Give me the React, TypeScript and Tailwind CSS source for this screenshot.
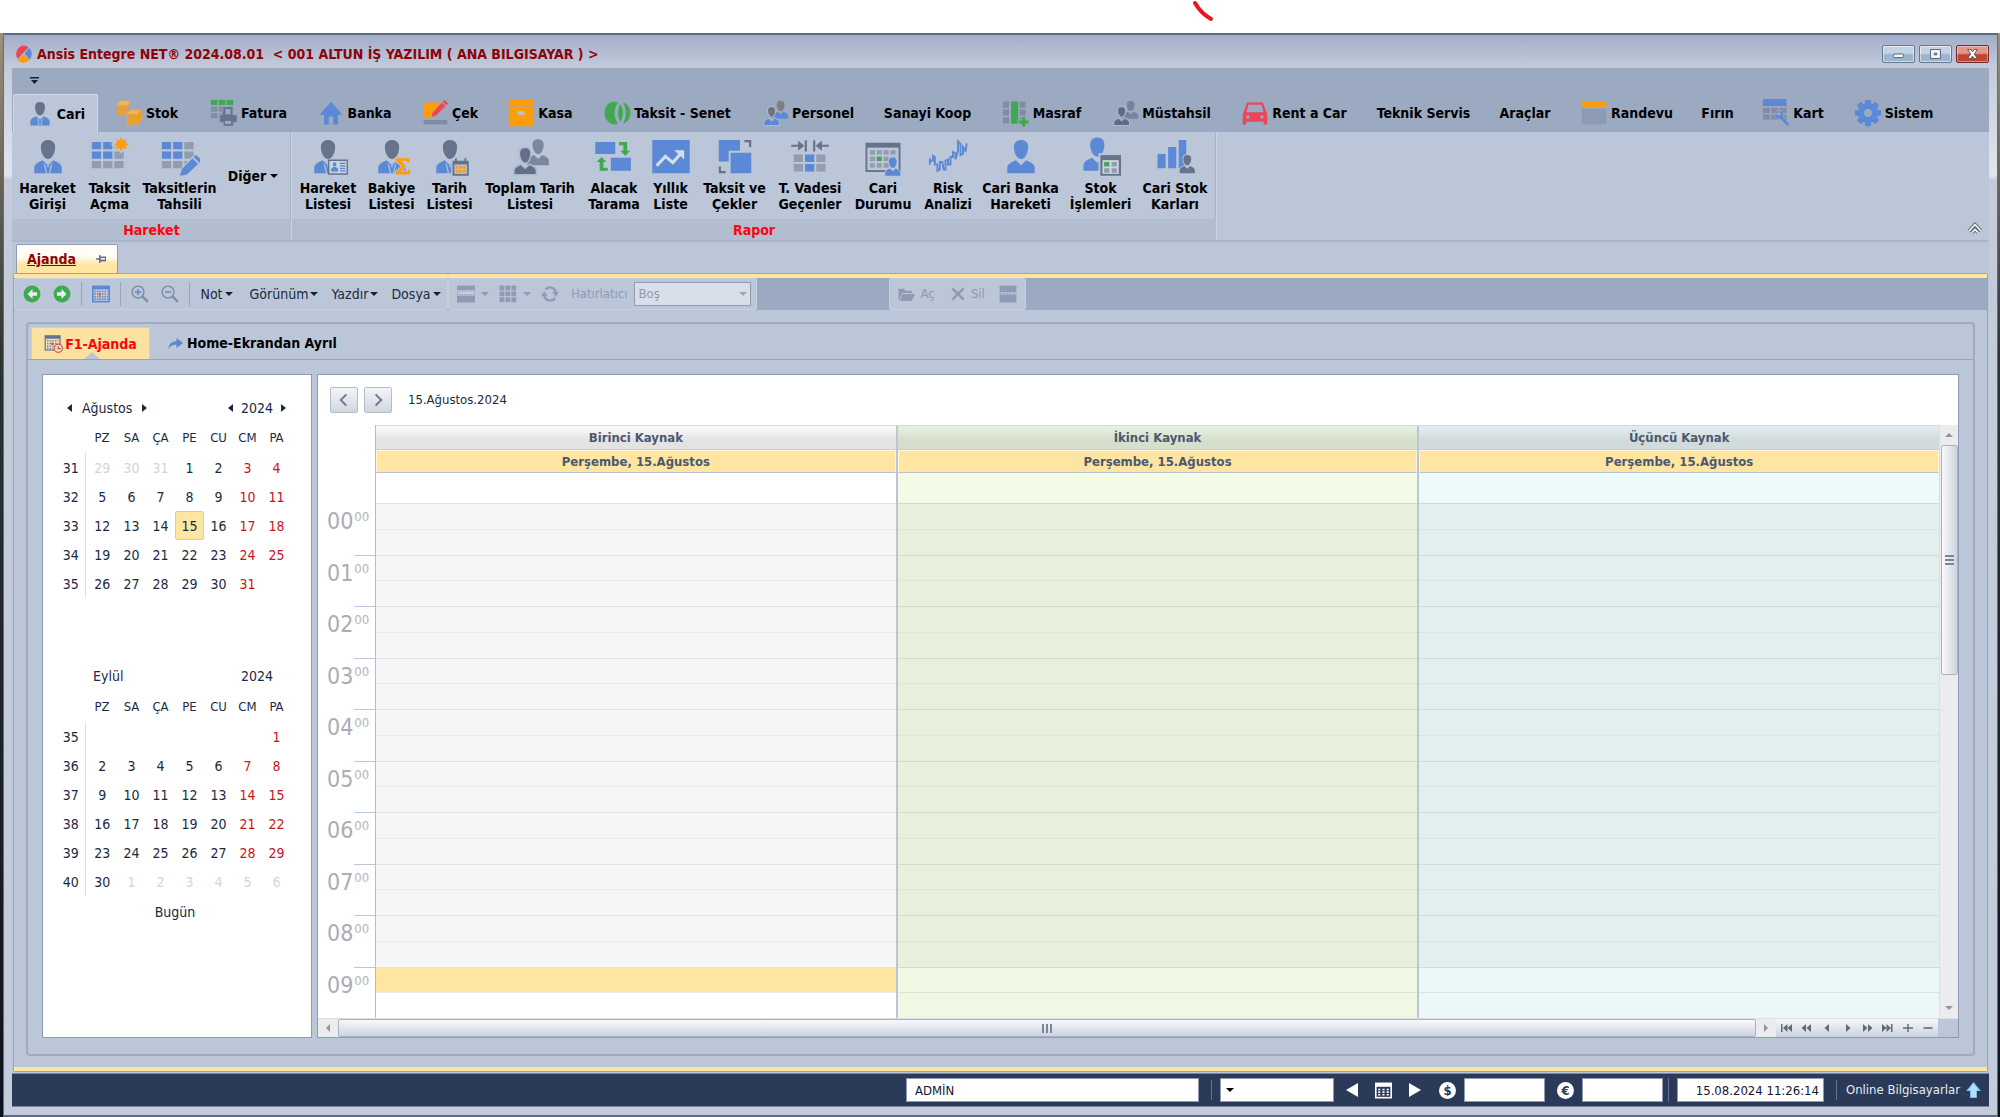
import { ReactNode } from "react";
import { clsx } from "clsx";

const BLUE = "#5b89d6";
const SLATE = "#66738a";
const GRAY = "#929daf";
const GREEN = "#3fa94f";
const ORANGE = "#fd9d0b";
const RED = "#ea4659";
const PAPER = "#bbc6d8";

type SvgProps = { children: ReactNode; className?: string; box?: string };

const Svg = ({ children, className = "size-7", box = "0 0 32 32" }: SvgProps) => (
  <svg viewBox={box} className={clsx("shrink-0", className)} aria-hidden="true">
    {children}
  </svg>
);

type FigureProps = { head?: string; body?: string; tie?: boolean; at?: string };

const Figure = ({ head = SLATE, body = BLUE, tie = false, at }: FigureProps) => (
  <g transform={at}>
    <path
      d="M16 2.4c-3.7 0-5.7 2.3-5.7 5.6 0 3.9 2 9.6 5.7 9.6s5.7-5.7 5.7-9.6c0-3.300-2-5.600-5.700-5.600z"
      fill={head}
    />
    <path
      d="M5 29v-4.500c0-3 3.500-4.500 6.800-6l4.200 4 4.200-4c3.300 1.500 6.800 3 6.800 6V29z"
      fill={body}
    />
    {tie && (
      <path
        d="M12.300 19.500l2 9.500h1l-1.500-6.500zM19.700 19.500l-2 9.500h-1l1.500-6.500zM15 22.500h2l-1 2z"
        fill={PAPER}
      />
    )}
  </g>
);

const cells = [0, 1, 2];

type GridProps = {
  color: (col: number, row: number) => string;
  x?: number;
  y?: number;
  w?: number;
  h?: number;
  px?: number;
  py?: number;
  rows?: number[];
};

const Grid = ({
  color,
  x = 3,
  y = 4,
  w = 7.4,
  h = 5.8,
  px = 9,
  py = 7.6,
  rows = cells,
}: GridProps) => (
  <>
    {rows.map((r) =>
      cells.map((c) => (
        <rect
          key={`${r}-${c}`}
          x={x + c * px}
          y={y + r * py}
          width={w}
          height={h}
          fill={color(c, r)}
        />
      ))
    )}
  </>
);

const cornerBlue = (c: number, r: number) => (c < 2 && r < 2 ? BLUE : GRAY);

const TwoFigures = ({ back, front, body = front, backBody = back }: {
  back: string;
  front: string;
  body?: string;
  backBody?: string;
}) => (
  <>
    <Figure head={back} body={backBody} at="translate(10 0) scale(.78)" />
    <g stroke="#adb9cd" strokeWidth="1.500">
      <Figure head={front} body={body} at="translate(-1 6.500) scale(.82)" />
    </g>
  </>
);

const MiniCalendar = () => (
  <>
    <rect x="17" y="17" width="14" height="14" fill={PAPER} />
    <path d="M18 19h2v-2h1.500v2h6v-2H29v2h2v12H18z" fill={SLATE} />
    <path d="M19.500 22h10v7.500h-10z" fill={PAPER} />
    <path
      d="M20.500 23h2.300v2.300h-2.300zM23.400 23h2.300v2.300h-2.300zM26.300 23h2.300v2.300h-2.300zM20.500 26.200h2.300v2.300h-2.300zM23.400 26.200h2.300v2.300h-2.300zM26.300 26.200h2.300v2.300h-2.300z"
      fill={ORANGE}
    />
  </>
);

const GearShape = () => (
  <>
    {[0, 45, 90, 135].map((a) => (
      <rect
        key={a}
        x="12.500"
        y="1"
        width="7"
        height="30"
        rx="1.500"
        fill={BLUE}
        transform={`rotate(${a} 16 16)`}
      />
    ))}
    <circle cx="16" cy="16" r="11.500" fill={BLUE} />
    <circle cx="16" cy="16" r="4.500" fill="#9ba9c1" />
  </>
);

const ribbonTabs: { label: string; width: string; icon?: ReactNode }[] = [
  { label: "Cari", width: "w-[85px]", icon: <Figure tie /> },
  {
    label: "Stok",
    width: "w-[97px]",
    icon: (
      <>
        <path d="M2 7l4-5h11l-2 4v13H2z" fill="#e6a13a" />
        <path d="M2 7l4-5h11l-3 5z" fill="#f0b659" />
        <path d="M15 7l2-5v8h-2z" fill={ORANGE} />
        <path d="M13 17l4-5h13v12l-4 6H13z" fill="#e6a13a" stroke="#a9b0bb" />
        <path d="M13 17l4-4h12l-3 4z" fill="#f0b659" />
        <path d="M26 17l3.500-4v11L26 29.500z" fill={ORANGE} />
      </>
    ),
  },
  {
    label: "Fatura",
    width: "w-[107px]",
    icon: (
      <>
        <Grid color={(_, r) => (r === 0 ? GREEN : "#808da4")} x={1} y={1} w={7.5} />
        <path d="M14 13h12v5h5v9h-4v4H15v-4h-4v-9h3z" fill={SLATE} stroke="#9ba9c1" />
        <path d="M16.500 10.500h8v8h-8z" fill="#9ba9c1" stroke={SLATE} strokeWidth="2" />
        <path d="M17 25h7v3.500h-7z" fill="#9ba9c1" />
      </>
    ),
  },
  {
    label: "Banka",
    width: "w-[104px]",
    icon: <path d="M16 3L3 18h5v11h5.500V20h5v9H24V18h5z" fill={BLUE} />,
  },
  {
    label: "Çek",
    width: "w-[87px]",
    icon: (
      <>
        <path d="M3 4h20L13 18v3H3z" fill={ORANGE} />
        <path d="M13 16L24 4l4 4-11 11-5 1.500z" fill={RED} />
        <path d="M25 3l2-2 4 4-2 2z" fill={RED} />
        <path d="M3 24h27v5H3z" fill="#7e8ba2" />
      </>
    ),
  },
  {
    label: "Kasa",
    width: "w-[94px]",
    icon: (
      <>
        <path d="M2 1h28v6H2zM2 8.500h28V31H2z" fill={ORANGE} />
        <path d="M12 14h8v4h-8z" fill="#b8c3d4" />
      </>
    ),
  },
  {
    label: "Taksit - Senet",
    width: "w-[160px]",
    icon: (
      <>
        <path d="M12.500 3a11 13 0 1 0 4.500 25c-5-7-5-17 0-24a13 13 0 0 0-4.500-1z" fill={GREEN} />
        <path d="M20 6c3.500 6 3.500 14 0 20-3.500-6-3.500-14 0-20z" fill={GREEN} />
        <path d="M23 4c4 7 4 17 0 24 11-3 11-21 0-24z" fill={GREEN} />
      </>
    ),
  },
  {
    label: "Personel",
    width: "w-[121px]",
    icon: <TwoFigures back="#7d7f86" front="#6f7682" body={BLUE} backBody={BLUE} />,
  },
  { label: "Sanayi Koop", width: "w-[119px]" },
  {
    label: "Masraf",
    width: "w-[109px]",
    icon: (
      <>
        <Grid color={() => "#808da4"} x={1} y={3} w={7} h={7} px={9.5} py={9} />
        <path d="M10.500 3h8v25h-8z" fill={GREEN} />
        <path d="M22.500 20h4.500v4h4v4.500h-4v3.500h-4.500v-3.500h-4V24h4z" fill={GREEN} stroke="#9ba9c1" />
      </>
    ),
  },
  {
    label: "Müstahsil",
    width: "w-[130px]",
    icon: <TwoFigures back="#76839a" front="#5f6c83" />,
  },
  {
    label: "Rent a Car",
    width: "w-[136px]",
    icon: (
      <>
        <path
          d="M7 4h18l4 11 1 2v12h-4v-3H6v3H2V17l1-2z"
          fill={RED}
        />
        <path d="M8.500 6.500h15L26 15H6z" fill="#9ba9c1" />
        <circle cx="8" cy="20.500" r="2" fill="#9ba9c1" />
        <circle cx="24" cy="20.500" r="2" fill="#9ba9c1" />
      </>
    ),
  },
  { label: "Teknik Servis", width: "w-[123px]" },
  { label: "Araçlar", width: "w-[80px]" },
  {
    label: "Randevu",
    width: "w-[123px]",
    icon: (
      <>
        <path d="M2 3h28v6H2z" fill={ORANGE} />
        <path d="M2 11h28v18H2z" fill="#8c9ab3" />
      </>
    ),
  },
  { label: "Fırın", width: "w-[59px]" },
  {
    label: "Kart",
    width: "w-[92px]",
    icon: (
      <>
        <path d="M1 0h27v8H1z" fill={BLUE} />
        <Grid color={() => "#808da4"} x={1} y={10} h={6} w={8} px={9.5} rows={[0, 1]} />
        <path
          d="M17 13.500c5-1.500 9 2 7.500 7l7 8-2.800 3-7.500-8.500c-4.500 1-7.500-2.500-6.200-7.500l4 4 2.500-2.500z"
          fill={BLUE}
          stroke="#9ba9c1"
        />
      </>
    ),
  },
  { label: "Sistem", width: "w-[109px]", icon: <GearShape /> },
];

type RibbonItem = { label: [string, string]; width: string; icon: ReactNode };

const hareketItems: RibbonItem[] = [
  { label: ["Hareket", "Girişi"], width: "w-[63px]", icon: <Figure tie /> },
  {
    label: ["Taksit", "Açma"],
    width: "w-[61px]",
    icon: (
      <>
        <Grid color={cornerBlue} x={1.5} />
        <path
          d="M25 0l1.400 2.800 2.800-1.200-.8 3 2.800 1.100-2.800 1.200.8 3-2.800-1.200L25 11.500l-1.400-2.800-2.800 1.200.8-3-2.800-1.200 2.800-1.100-.8-3 2.800 1.200z"
          fill={ORANGE}
          stroke={PAPER}
          strokeWidth="2"
          paintOrder="stroke"
        />
      </>
    ),
  },
  {
    label: ["Taksitlerin", "Tahsili"],
    width: "w-[79px]",
    icon: (
      <>
        <Grid color={cornerBlue} x={1.5} />
        <path
          d="M16 31l1.500-5.500L26 17l4.500 4.500-9 8.500zM27 16l1.800-1.800 4.500 4.500-1.800 1.800z"
          fill={BLUE}
          stroke={PAPER}
          strokeWidth="2"
          paintOrder="stroke"
        />
      </>
    ),
  },
];

const raporItems: RibbonItem[] = [
  {
    label: ["Hareket", "Listesi"],
    width: "w-[64px]",
    icon: (
      <>
        <Figure tie />
        <path d="M16.500 18.500h15v11h-15z" fill="#c9d3e3" stroke={SLATE} strokeWidth="1.200" />
        <path d="M20 20.300h2.500v3H20zM18.500 27.500v-2.200l1.700-1.300h2.100l1.700 1.300v2.200z" fill={BLUE} />
        <path d="M25.500 21h4.500M25.500 23h4.500M25.500 25h4.500M25.500 27h4.500" stroke={BLUE} />
      </>
    ),
  },
  {
    label: ["Bakiye", "Listesi"],
    width: "w-[63px]",
    icon: (
      <>
        <Figure tie />
        <path
          d="M19 17h11v3.500h-1.500L28 19h-4.500l3.500 4.500-4 4h5.500l.5-1.500h1.500v4H19v-2l5-4.500-5-4.500z"
          fill={ORANGE}
          stroke={PAPER}
          paintOrder="stroke"
          strokeWidth="1.500"
        />
      </>
    ),
  },
  {
    label: ["Tarih", "Listesi"],
    width: "w-[53px]",
    icon: (
      <>
        <Figure tie />
        <MiniCalendar />
      </>
    ),
  },
  {
    label: ["Toplam Tarih", "Listesi"],
    width: "w-[108px]",
    icon: <TwoFigures back="#7b879b" front="#626f86" />,
  },
  {
    label: ["Alacak", "Tarama"],
    width: "w-[60px]",
    icon: (
      <>
        <path d="M1 4h16v9.500H1zM13.500 16.500h16V27h-16z" fill={BLUE} />
        <path d="M20 4h6.500v7H29l-4 4-4-4h2.500V6.500H20zM11 27H4.500v-7H2l4-4 4 4H7.500v4.500H11z" fill={GREEN} />
      </>
    ),
  },
  {
    label: ["Yıllık", "Liste"],
    width: "w-[53px]",
    icon: (
      <>
        <path d="M1 2.4h30V29H1z" fill={BLUE} />
        <path d="M4.500 23l7-7.500 6 5L24 13" fill="none" stroke="#d6deeb" strokeWidth="2.500" />
        <path d="M18.500 10.500h8V18z" fill="#d6deeb" />
      </>
    ),
  },
  {
    label: ["Taksit ve", "Çekler"],
    width: "w-[75px]",
    icon: (
      <>
        <path d="M3 2.4h17V11h-9v8.500H3zM12.500 12.500H29V29H12.500z" fill={BLUE} />
        <path d="M23.500 2.4H29V8h-1.800V4.200h-3.700zM3 23.500h1.800v3.700h3.700V29H3z" fill={SLATE} />
      </>
    ),
  },
  {
    label: ["T. Vadesi", "Geçenler"],
    width: "w-[76px]",
    icon: (
      <>
        <Grid color={(c) => (c === 1 ? BLUE : GRAY)} y={14} rows={[0, 1]} h={6} />
        <path
          d="M1 6.200h5.500V3l5 4-5 4V7.800H1zM11.800 2.500h1.700v9h-1.700zM31 6.200h-5.500V3l-5 4 5 4V7.800H31zM20.200 2.500h-1.700v9h1.700z"
          fill={SLATE}
        />
      </>
    ),
  },
  {
    label: ["Cari", "Durumu"],
    width: "w-[70px]",
    icon: (
      <>
        <path d="M2 4.500h28V28H2z" fill={SLATE} />
        <path d="M3.500 8.500h25v18h-25z" fill={PAPER} />
        {[0, 1, 2].map((r) =>
          [0, 1, 2, 3].map((c) => (
            <rect
              key={`${r}${c}`}
              x={5.5 + c * 5.5}
              y={10.5 + r * 5.2}
              width="4"
              height="3.600"
              fill={c === 1 && r === 1 ? GREEN : GRAY}
            />
          ))
        )}
        <g stroke={PAPER} strokeWidth="2" paintOrder="stroke">
          <Figure head={BLUE} at="translate(15 15) scale(.55)" />
        </g>
      </>
    ),
  },
  {
    label: ["Risk", "Analizi"],
    width: "w-[60px]",
    icon: (
      <path
        d="M1.500 22v-5M2 19h2v-4l1.500 1v6h2v5l2-1v-6h2l1 6h1.500v-7l2-1v4h2v-6h2v-4l2 1v5l2-7V3.500l2 2v9l2-1V8l2 3 1-6"
        fill="none"
        stroke={BLUE}
        strokeWidth="1.500"
      />
    ),
  },
  {
    label: ["Cari Banka", "Hareketi"],
    width: "w-[85px]",
    icon: <Figure head={BLUE} />,
  },
  {
    label: ["Stok", "İşlemleri"],
    width: "w-[75px]",
    icon: (
      <>
        <Figure head={BLUE} at="translate(-3 -2)" />
        <path d="M14 13h18v19H14z" fill={PAPER} />
        <path d="M15.500 14.500H32V31H15.500z" fill={SLATE} />
        <path d="M17.200 18.500h13v11h-13z" fill="#cdd5e2" />
        <path d="M18.500 20h4.200v3.500h-4.200z" fill={GREEN} />
        <path d="M24.500 20h4.200v3.500h-4.200zM18.500 25h4.200v3.500h-4.200zM24.500 25h4.200v3.500h-4.200z" fill={GRAY} />
      </>
    ),
  },
  {
    label: ["Cari Stok", "Karları"],
    width: "w-[74px]",
    icon: (
      <>
        <path d="M2 13.500h6.500V25H2zM10.500 8h6.500v17h-6.500zM19 2.4h6V25h-6z" fill={BLUE} />
        <g stroke={PAPER} strokeWidth="2.500" paintOrder="stroke">
          <Figure body={SLATE} at="translate(17 13) scale(.55)" />
        </g>
      </>
    ),
  },
];

const Caret = ({ className = "border-t-[#14203a]" }: { className?: string }) => (
  <span
    className={clsx(
      "inline-block border-x-[4px] border-t-[4px] border-x-transparent",
      className
    )}
  />
);

const TitleBar = () => (
  <header className="flex h-[33px] items-center pl-[3px] pt-1">
    <Svg className="size-[18px]">
      <path d="M16 1a14 15 0 0 0-11 24L24 4A14 15 0 0 0 16 1z" fill={RED} />
      <path d="M25 5L17 15l9 11a15 15 0 0 0-1-21z" fill={BLUE} />
      <path d="M16 16L5 27c6 6 15 6 20 0z" fill={ORANGE} />
    </Svg>
    <h1 className="ml-1 whitespace-pre font-bold text-[#8e0209]">
      {"Ansis Entegre NET® 2024.08.01  < 001 ALTUN İŞ YAZILIM ( ANA BILGISAYAR ) >"}
    </h1>
    <div className="ml-auto flex gap-1">
      {[
        ["Simge durumuna küçült", <rect key="a" x="11" y="9" width="11" height="4" rx="1" />],
        [
          "Ekranı kapla",
          <path key="b" d="M11 4h11v10H11zM15 8v2h3V8z" fillRule="evenodd" />,
        ],
      ].map(([name, shape]) => (
        <button
          key={name as string}
          aria-label={name as string}
          className="h-[18px] w-[33px] rounded-xs border border-[#67788f] bg-linear-to-b from-[#c3d3e4] from-45% to-[#9db5cc] to-55% inset-ring inset-ring-white/50"
        >
          <Svg className="h-4 w-[31px]" box="0 0 33 18">
            <g fill="#f7f9fc" stroke="#4b5568">{shape}</g>
          </Svg>
        </button>
      ))}
      <button
        aria-label="Kapat"
        className="h-[18px] w-[33px] rounded-xs border border-[#6b2a2c] bg-linear-to-b from-[#e2968a] from-45% to-[#bf4630] to-55% inset-ring inset-ring-white/40"
      >
        <Svg className="h-4 w-[31px]" box="0 0 33 18">
          <path d="M11 4h3.500l2 2.500 2-2.500H22l-3.500 5 3.500 5h-3.500l-2-2.500-2 2.500H11l3.500-5z" fill="#fff" stroke="#62464c" />
        </Svg>
      </button>
    </div>
  </header>
);

const RibbonGroup = ({ title, children }: { title: string; children: ReactNode }) => (
  <section className="flex flex-col border-r border-[#c9d3e2] shadow-[inset_-1px_0_0_#a5b2c8]">
    <div className="flex h-[87px] pl-1 pr-1 pt-[5px]">{children}</div>
    <h2 className="h-[21px] bg-[#b2bed0] text-center font-bold leading-[22px] text-[#fb0510]">
      {title}
    </h2>
  </section>
);

const RibbonButton = ({ label, width, icon }: RibbonItem) => (
  <button className={clsx("flex shrink-0 flex-col items-center font-bold leading-4", width)}>
    <Svg className="size-10">{icon}</Svg>
    <span className="mt-[3px] whitespace-nowrap">
      {label[0]}
      <br />
      {label[1]}
    </span>
  </button>
);

const Ribbon = () => (
  <div className="bg-[#9ba9c1]">
    <div className="flex h-[26px] items-center pl-[18px]">
      <button aria-label="Hızlı erişim">
        <Svg className="h-2 w-[9px]" box="0 0 9 8">
          <path d="M0 0h9v1.500H0zM1 3h7L4.500 7z" fill="#14203a" />
        </Svg>
      </button>
    </div>
    <nav className="flex h-[38px] pl-px">
      {ribbonTabs.map(({ label, width, icon }, i) => (
        <button
          key={label}
          className={clsx(
            "flex shrink-0 items-center justify-center gap-[3px] whitespace-nowrap font-bold",
            width,
            i === 0 && "rounded-t-xs border-x border-t border-[#d3dbe8] bg-[#bbc6d8]"
          )}
        >
          {icon && <Svg>{icon}</Svg>}
          {label}
        </button>
      ))}
    </nav>
    <div className="flex border-b-2 border-[#a9b6cb] bg-[#bbc6d8]">
      <RibbonGroup title="Hareket">
        {hareketItems.map((item) => (
          <RibbonButton key={item.label[0]} {...item} />
        ))}
        <button className="flex w-[68px] items-center justify-center gap-1 self-start pt-[29px] font-bold">
          Diğer <Caret className="border-t-black" />
        </button>
      </RibbonGroup>
      <RibbonGroup title="Rapor">
        {raporItems.map((item) => (
          <RibbonButton key={item.label.join()} {...item} />
        ))}
      </RibbonGroup>
      <button aria-label="Şeridi daralt" className="ml-auto mr-1.5 self-end pb-1.5">
        <Svg className="h-3 w-4" box="0 0 16 12">
          <path d="M2 9l6-6.500L14 9M5 10.500l3-3 3 3" fill="none" stroke="#646f82" strokeWidth="3.500" />
          <path d="M2 9l6-6.500L14 9M5 10.500l3-3 3 3" fill="none" stroke="#fff" strokeWidth="1.500" />
        </Svg>
      </button>
    </div>
  </div>
);

const Divider = () => <span className="h-6 w-px bg-[#97a4bb]" />;

const CircleArrow = ({ flip }: { flip?: boolean }) => (
  <Svg className={clsx("size-[18px]", flip && "-scale-x-100")}>
    <circle cx="16" cy="16" r="15" fill={GREEN} />
    <path d="M17 7l-9 9 9 9v-6h8v-6h-8z" fill="#e8f0ee" />
  </Svg>
);

const Magnifier = ({ plus }: { plus?: boolean }) => (
  <Svg className="size-[18px]">
    <circle cx="12.500" cy="12.500" r="10.500" fill="none" stroke="#7f8ba0" strokeWidth="2.500" />
    <path d="M20 20l10 10" stroke="#7f8ba0" strokeWidth="4" />
    <path d={plus ? "M7 12.500h11M12.500 7v11" : "M7 12.500h11"} stroke={BLUE} strokeWidth="2.500" />
  </Svg>
);

const panel = "flex items-center rounded-xs border border-[#c6d0df] bg-[#bbc6d8]";

const Toolbar = () => (
  <div className="flex h-8 bg-[#9ba9c1] text-[#1c2942]">
    <div className={clsx(panel, "pl-2")}>
      <button aria-label="Geri"><CircleArrow /></button>
      <button aria-label="İleri" className="ml-3 mr-2.5"><CircleArrow flip /></button>
      <Divider />
      <button aria-label="Takvim" className="mx-2.5">
        <Svg className="size-[18px]">
          <path d="M0 1h32v30H0z" fill={BLUE} />
          <path d="M3 8h26v20H3z" fill="#c7d1e0" />
          <path d="M4 11.500h24M4 16h24M4 20.500h24M4 25h24" stroke="#7684a0" strokeWidth="3" strokeDasharray="3 1.500" />
          <path d="M12 14.500h4v4h-4z" fill={RED} />
        </Svg>
      </button>
      <Divider />
      <button aria-label="Yakınlaştır" className="ml-2.5"><Magnifier plus /></button>
      <button aria-label="Uzaklaştır" className="ml-3 mr-2.5"><Magnifier /></button>
      <Divider />
      {[
        ["Not", "w-[53px]"],
        ["Görünüm", "w-[82px]"],
        ["Yazdır", "w-[60px]"],
        ["Dosya", "w-[62px]"],
      ].map(([t, w]) => (
        <button key={t} className={clsx("flex shrink-0 items-center justify-center gap-0.5", w)}>
          {t} <Caret />
        </button>
      ))}
    </div>
    <div className={clsx(panel, "pl-2 pr-[5px] text-[#8e9bb2]")}>
      <button disabled aria-label="Renk" className="flex items-center gap-1.5">
        <Svg className="size-[18px]">
          <path d="M0 1h32v8H0zM0 19h32v12H0z" fill="#8f9bb3" />
          <path d="M1 11h30v6H1z" fill="#c6cfde" stroke="#8f9bb3" strokeDasharray="2 2" strokeWidth="2" />
        </Svg>
        <Caret className="border-t-[#8e9bb2]" />
      </button>
      <button disabled aria-label="Tablo" className="ml-2.5 flex items-center gap-1.5">
        <Svg className="size-[18px]">
          <Grid color={() => "#8f9bb3"} x={1} y={1} w={8.5} h={8.5} px={10.5} py={10.5} />
        </Svg>
        <Caret className="border-t-[#8e9bb2]" />
      </button>
      <button disabled aria-label="Yenile" className="ml-2.5">
        <Svg className="size-[18px]">
          <path d="M6 20a10.500 10.500 0 0 0 19 3M26 12A10.500 10.500 0 0 0 8 8" fill="none" stroke="#8f9bb3" strokeWidth="4" />
          <path d="M0 20l6-9 6 9zM20 12l6 9 6-9z" fill="#8f9bb3" />
        </Svg>
      </button>
      <label htmlFor="reminder" className="ml-3 text-[13px]">Hatırlatıcı</label>
      <span className="relative ml-1.5 flex">
        <select
          id="reminder"
          disabled
          className="h-6 w-[117px] appearance-none border border-[#8f9cb3] bg-[#d9dfe8] pl-1 text-[13px] text-[#8e99ad] opacity-100"
        >
          <option>Boş</option>
        </select>
        <Caret className="absolute right-1 top-2.5 border-t-[#9aa5b9]" />
      </span>
    </div>
    <div className={clsx(panel, "ml-[132px] gap-1.5 px-2 text-[13px] text-[#8e9bb2]")}>
      <button disabled className="flex items-center gap-1.5">
        <Svg className="size-[17px]">
          <path d="M1 5h10l3 4h12v4H8L3 26l-2 2zM9 15h23l-6 13H4z" fill="#8f9bb3" />
        </Svg>
        Aç
      </button>
      <button disabled className="ml-2.5 flex items-center gap-1.5">
        <Svg className="size-[14px]">
          <path d="M3 3l26 26M29 3L3 29" stroke="#8f9bb3" strokeWidth="6" />
        </Svg>
        Sil
      </button>
      <button disabled aria-label="Böl" className="ml-2">
        <Svg className="size-[18px]">
          <path d="M1 1h30v12H1zM1 17h30v14H1z" fill="#8f9bb3" />
          <path d="M1 15h30" stroke="#8f9bb3" strokeWidth="2" strokeDasharray="3 3" />
        </Svg>
      </button>
    </div>
  </div>
);

const weekdays = ["PZ", "SA", "ÇA", "PE", "CU", "CM", "PA"];

const august: [number, ...(number | null)[]][] = [
  [31, -29, -30, -31, 1, 2, 3, 4],
  [32, 5, 6, 7, 8, 9, 10, 11],
  [33, 12, 13, 14, 15, 16, 17, 18],
  [34, 19, 20, 21, 22, 23, 24, 25],
  [35, 26, 27, 28, 29, 30, 31, null],
];

const september: [number, ...(number | null)[]][] = [
  [35, null, null, null, null, null, null, 1],
  [36, 2, 3, 4, 5, 6, 7, 8],
  [37, 9, 10, 11, 12, 13, 14, 15],
  [38, 16, 17, 18, 19, 20, 21, 22],
  [39, 23, 24, 25, 26, 27, 28, 29],
  [40, 30, -1, -2, -3, -4, -5, -6],
];

// negative days belong to the neighbouring month
const MonthTable = ({ weeks, today }: { weeks: typeof august; today?: number }) => (
  <table className="w-[234px] table-fixed border-collapse self-start text-center">
    <thead>
      <tr className="h-[30px] text-[13px]">
        <th className="w-[28px]" />
        {weekdays.map((d, i) => (
          <th key={d} className={clsx("p-0 font-normal", i === 0 ? "w-[32px] pl-0.5" : "w-[29px]")}>
            {d}
          </th>
        ))}
      </tr>
    </thead>
    <tbody>
      {weeks.map(([week, ...days]) => (
        <tr key={week} className="h-[29px]">
          <td className="border-r border-[#dcdfe4] p-0">{week}</td>
          {days.map((d, i) => (
            <td
              key={i}
              className={clsx(
                "p-0",
                i === 0 && "pl-0.5",
                d !== null && d < 0 && "text-[#d3d5d8]",
                d !== null && d > 0 && i > 4 && "text-[#c9151b]"
              )}
            >
              {d !== null && d === today ? (
                <span className="flex h-[29px] items-center justify-center rounded-xs border border-[#eccb7c] bg-[#fee5a1]">
                  {d}
                </span>
              ) : (
                d !== null && Math.abs(d)
              )}
            </td>
          ))}
        </tr>
      ))}
    </tbody>
  </table>
);

const Arrow = ({ right, name }: { right?: boolean; name: string }) => (
  <button
    aria-label={name}
    className={clsx(
      "size-0 border-y-[4px] border-y-transparent",
      right ? "border-l-[5px] border-l-[#1c2942]" : "border-r-[5px] border-r-[#1c2942]"
    )}
  />
);

const DateNavigator = () => (
  <aside className="flex w-[270px] shrink-0 flex-col border border-[#8e9bb2] bg-white pl-[14px] pt-[18px] text-[#1c2942]">
    <div className="flex h-[30px] items-center pl-[10px] pr-[25px]">
      <Arrow name="Önceki ay" />
      <span className="mx-2.5 text-center">Ağustos</span>
      <Arrow right name="Sonraki ay" />
      <span className="ml-auto" />
      <Arrow name="Önceki yıl" />
      <span className="mx-2">2024</span>
      <Arrow right name="Sonraki yıl" />
    </div>
    <MonthTable weeks={august} today={15} />
    <div className="mt-[62px] flex h-[32px] items-center justify-between pl-9 pr-[38px]">
      <span>Eylül</span>
      <span>2024</span>
    </div>
    <MonthTable weeks={september} />
    <button className="mt-0.5 h-7 w-[236px]">Bugün</button>
  </aside>
);

const resources = [
  {
    name: "Birinci Kaynak",
    head: "bg-linear-to-b from-[#f8f8f8] from-10% to-[#e3e3e3] to-60%",
    allDay: "bg-white",
    off: "bg-[#f6f6f6]",
    work: "bg-white",
    line: "border-[#e0e1e2]",
    half: "border-[#ebebec]",
  },
  {
    name: "İkinci Kaynak",
    head: "bg-linear-to-b from-[#e6efdf] from-10% to-[#d6dfcc] to-60%",
    allDay: "bg-[#f3fbe6]",
    off: "bg-[#e7f0dc]",
    work: "bg-[#f0f8e3]",
    line: "border-[#d3dcc9]",
    half: "border-[#dde6d2]",
  },
  {
    name: "Üçüncü Kaynak",
    head: "bg-linear-to-b from-[#e2ebed] from-10% to-[#d2dbdc] to-60%",
    allDay: "bg-[#edfafb]",
    off: "bg-[#e3efef]",
    work: "bg-[#ebf7f8]",
    line: "border-[#cfdadb]",
    half: "border-[#d9e4e5]",
  },
];

const hours = ["00", "01", "02", "03", "04", "05", "06", "07", "08", "09"];

const TimeRuler = () => (
  <div className="flex w-[58px] shrink-0 flex-col border-r border-[#b3bccd] pl-[9px]">
    <div className="h-[78px]" />
    {hours.map((h, i) => (
      <div key={h} className="flex min-h-12 flex-1 basis-0 gap-px">
        <span className="pt-1.5 text-[23px] leading-6 text-[#a9adb5]">{h}</span>
        <span
          className={clsx(
            "flex-1 border-t pt-[5px] text-[13px] leading-4 text-[#b1b5bc]",
            i === 0 ? "border-transparent" : "border-[#bcc6d8]"
          )}
        >
          00
        </span>
      </div>
    ))}
  </div>
);

const ResourceColumn = ({ r, selected }: { r: (typeof resources)[number]; selected: boolean }) => (
  <div className="flex flex-1 basis-0 flex-col border-r-2 border-[#bcc5d6] last:border-r-0">
    <div className={clsx("h-6 border-b border-[#c8ced6] text-center leading-6", r.head)}>{r.name}</div>
    <div className="h-[23px] border border-b-[#b7c0d0] border-[#fff6dc] bg-[#fee6a2] text-center leading-[21px]">
      Perşembe, 15.Ağustos
    </div>
    <div className={clsx("h-[30px]", r.allDay)} />
    {hours.map((h, i) => (
      <div key={h} className={clsx("flex min-h-12 flex-1 basis-0 flex-col", i < 9 ? r.off : r.work)}>
        <button
          aria-label={`${r.name} ${h}:00`}
          className={clsx("flex-1 border-t", r.line, selected && i === 9 && "bg-[#fee6a2]")}
        />
        <button aria-label={`${r.name} ${h}:30`} className={clsx("flex-1 border-t", r.half)} />
      </div>
    ))}
  </div>
);

const Grip = ({ vertical }: { vertical?: boolean }) => (
  <span className={clsx("flex gap-0.5", vertical ? "flex-col" : "flex-row")}>
    {cells.map((k) => (
      <span key={k} className={clsx("bg-[#7b8699]", vertical ? "h-0.5 w-[9px]" : "h-[9px] w-0.5")} />
    ))}
  </span>
);

const VerticalScroll = () => (
  <div className="flex w-[19px] shrink-0 flex-col items-center border-l border-[#dcdee2] bg-[#ececee]">
    <button
      aria-label="Yukarı"
      className="mb-2 mt-2 border-x-[4px] border-b-[4px] border-x-transparent border-b-[#8e95a3]"
    />
    <div className="flex h-[230px] w-[17px] items-center justify-center rounded-xs border border-[#abb2bf] bg-linear-to-r from-[#f8f9fb] to-[#cdd3df]">
      <Grip vertical />
    </div>
    <button
      aria-label="Aşağı"
      className="mb-2 mt-auto border-x-[4px] border-t-[4px] border-x-transparent border-t-[#8e95a3]"
    />
  </div>
);

const navButtons: [string, string][] = [
  ["İlk", "M1 2h1.500v8H1zM7.500 2v8L3 6zM12 2v8L7.500 6z"],
  ["Önceki sayfa", "M6 2v8L1.500 6zM11 2v8L6.500 6z"],
  ["Önceki", "M8 2v8L3.500 6z"],
  ["Sonraki", "M5 2v8l4.500-4z"],
  ["Sonraki sayfa", "M2 2v8l4.500-4zM7 2v8l4.500-4z"],
  ["Son", "M11.500 2H10v8h1.500zM1 2v8l4.500-4zM5.500 2v8L10 6z"],
  ["Ekle", "M5.300 2h1.400v3.300H11v1.400H6.700V10H5.300V6.700H1V5.300h4.300z"],
  ["Çıkar", "M1.500 5.200h9v1.600h-9z"],
];

const HorizontalScroll = () => (
  <div className="flex h-[19px] shrink-0 border-t border-[#dcdee2] bg-[#ececee]">
    <button aria-label="Sola" className="flex w-5 items-center justify-center">
      <span className="border-y-[4px] border-r-[4px] border-y-transparent border-r-[#8e95a3]" />
    </button>
    <div className="flex flex-1 items-center justify-center rounded-xs border border-[#abb2bf] bg-linear-to-b from-[#f8f9fb] to-[#cdd3df]">
      <Grip />
    </div>
    <button aria-label="Sağa" className="flex w-5 items-center justify-center">
      <span className="border-y-[4px] border-l-[4px] border-y-transparent border-l-[#8e95a3]" />
    </button>
    <div className="flex w-[162px] items-center justify-around bg-linear-to-b from-[#f7f8fa] to-[#ccd2de]">
      {navButtons.map(([name, d]) => (
        <button key={name} aria-label={name}>
          <Svg className="size-3" box="0 0 12 12">
            <path d={d} fill="#626a78" />
          </Svg>
        </button>
      ))}
    </div>
    <span className="w-5 bg-[#bbc6d8]" />
  </div>
);

const Scheduler = () => (
  <section className="flex min-w-0 flex-1 flex-col border border-[#8e9bb2] bg-white">
    <div className="flex h-[50px] items-center pl-3 text-[#1c2942]">
      {["M13 3l-7 7 7 7", "M7 3l7 7-7 7"].map((d, i) => (
        <button
          key={d}
          aria-label={i ? "Sonraki gün" : "Önceki gün"}
          className="mr-1.5 flex h-[26px] w-7 items-center justify-center rounded-xs border border-[#b5bdcb] bg-linear-to-b from-[#f4f5f8] to-[#d0d6e1]"
        >
          <Svg className="size-4" box="0 0 20 20">
            <path d={d} fill="none" stroke="#6d7a91" strokeWidth="2.500" />
          </Svg>
        </button>
      ))}
      <span className="ml-2.5 text-[13px]">15.Ağustos.2024</span>
    </div>
    <div className="flex flex-1">
      <TimeRuler />
      <div className="flex flex-1 border-t border-[#d5d8dd] text-[13px] font-bold text-[#4b586f]">
        {resources.map((r, i) => (
          <ResourceColumn key={r.name} r={r} selected={i === 0} />
        ))}
      </div>
      <VerticalScroll />
    </div>
    <HorizontalScroll />
  </section>
);

const Box = ({ name, width, value = "", right }: {
  name: string;
  width: string;
  value?: string;
  right?: boolean;
}) => (
  <input
    aria-label={name}
    defaultValue={value}
    className={clsx(
      "h-6 border border-[#8e9bb2] bg-white px-2 text-[13px] text-[#111827]",
      width,
      right && "pr-1 text-right"
    )}
  />
);

const coin =
  "ml-3 mr-2 size-[17px] rounded-full bg-white text-center text-[13px] font-bold leading-[17px] text-[#2b3a59]";

const StatusBar = () => (
  <footer className="flex h-[34px] shrink-0 items-center justify-end border-y border-[#7786a1] bg-[#2b3a59] pr-2">
    <Box name="Kullanıcı" width="w-[293px]" value="ADMİN" />
    <span className="ml-3 h-5 w-px bg-[#64738f]" />
    <span className="relative ml-2 flex">
      <select aria-label="Döviz tarihi" className="h-6 w-[114px] appearance-none border border-[#8e9bb2] bg-white">
        <option></option>
      </select>
      <Caret className="absolute left-1.5 top-2.5" />
    </span>
    <button aria-label="Önceki gün" className="ml-3 border-y-[7px] border-r-[12px] border-y-transparent border-r-white" />
    <button aria-label="Takvim" className="mx-[17px]">
      <Svg className="size-[17px]">
        <path d="M0 1h32v30H0z" fill="#fff" />
        <path d="M3 9h26v19H3z" fill="#2b3a59" />
        <path d="M6 14h21M6 19h21M6 24h21" stroke="#fff" strokeWidth="3" strokeDasharray="4 4" />
      </Svg>
    </button>
    <button aria-label="Sonraki gün" className="mr-1.5 border-y-[7px] border-l-[12px] border-y-transparent border-l-white" />
    <span className={coin}>$</span>
    <Box name="Dolar" width="w-[81px]" />
    <span className={coin}>€</span>
    <Box name="Euro" width="w-[81px]" />
    <span className="ml-[5px] mr-2 h-6 w-px bg-[#64738f]" />
    <Box name="Saat" width="w-[147px]" value="15.08.2024 11:26:14" right />
    <span className="ml-3 h-5 w-px bg-[#64738f]" />
    <a href="#online" className="ml-[9px] flex items-center gap-1.5 whitespace-nowrap text-[13px] text-[#e8ecf3]">
      Online Bilgisayarlar
      <Svg className="h-4 w-[15px]" box="0 0 15 16">
        <path d="M7.500 0L15 9h-4v7H4V9H0z" fill="#6fb9ee" />
        <path d="M7.500 1L13 8.500h-3V15H5V8.500H2z" fill="#b5dcf8" />
      </Svg>
    </a>
  </footer>
);

export default function App() {
  return (
    <div className="flex min-h-screen flex-col bg-white font-['DejaVu_Sans_Condensed','DejaVu_Sans','Noto_Sans',sans-serif] text-[14px] leading-5 text-black">
      <div className="flex h-[33px] shrink-0 pl-[1190px]">
        <svg viewBox="0 0 26 26" className="size-[26px]" aria-hidden="true">
          <path d="M5 3c4 7 9 12 16 16" fill="none" stroke="#e5161d" strokeWidth="4" strokeLinecap="round" />
        </svg>
      </div>
      <div className="flex flex-1 bg-linear-to-b from-[#a08f7c] via-[#2b3433] via-30% to-[#0d1220] pl-[3px] pr-0.5">
        <div className="flex min-w-0 flex-1 flex-col border-2 border-x border-[#5f6b80] bg-[linear-gradient(to_bottom,#a2aec8_0,#c3cbdb_32px,#e0e5ee_140px,#c4ccdb_145px)] px-2 pb-2">
          <TitleBar />
          <Ribbon />
          <main className="flex flex-1 flex-col bg-[#bbc6d8] px-px pb-px">
            <div className="flex h-[31px] items-end pl-[3px]">
              <div className="flex h-[29px] items-center gap-5 rounded-t-xs border border-b-0 border-[#8e9bb2] bg-linear-to-b from-[#fffdf5] from-40% to-[#fee6a2] to-70% px-2.5">
                <a href="#ajanda" className="font-bold text-[#8e0209] underline">Ajanda</a>
                <button aria-label="Sabitle">
                  <Svg className="h-2.5 w-[11px]" box="0 0 11 10">
                    <path d="M0 4.300h3V1h1.500v1.500H10v5H4.500V9H3V5.700H0z" fill="#66738a" />
                    <path d="M5 4h4v1.500H5z" fill="#fff" />
                  </Svg>
                </button>
              </div>
            </div>
            <div className="flex flex-1 flex-col rounded-xs border border-[#97a4bb]">
              <div className="h-1 bg-[#fee6a2]" />
              <Toolbar />
              <div className="mx-3 mb-[11px] mt-3 flex flex-1 flex-col rounded-sm border-2 border-[#9eabc1]">
                <div className="flex h-[36px] items-end border-b border-[#97a4bb] pl-[3px]">
                  <button className="relative flex h-8 w-[119px] items-center justify-center gap-0.5 border border-b-0 border-[#e0cf9f] bg-[#fbe2a0] font-bold text-[#fb0510]">
                    <Svg className="size-[19px]">
                      <path d="M1 2h27v26H1z" fill="#66738a" />
                      <path d="M3 8h23v18H3z" fill="#f6e2b0" />
                      <path d="M5 11.500h19M5 16h19M5 20.500h12M5 24.500h10" stroke="#7684a0" strokeWidth="2.500" strokeDasharray="2.500 2" />
                      <path d="M12 14.500h4v4h-4z" fill={RED} />
                      <circle cx="24" cy="24" r="7" fill="#fbe2a0" stroke={RED} strokeWidth="2" />
                      <path d="M24 20v4.500h4" fill="none" stroke="#66738a" strokeWidth="2" />
                    </Svg>
                    F1-Ajanda
                    <span className="absolute bottom-0 left-[52px] border-x-[8px] border-b-[7px] border-x-transparent border-b-[#bbc6d8]" />
                  </button>
                  <button className="ml-[18px] flex h-8 items-center gap-1 whitespace-nowrap font-bold">
                    <Svg className="size-[15px]">
                      <path d="M18 4l14 11-14 11v-7C10 18 4 22 1 28 1 18 8 11 18 11z" fill={BLUE} />
                    </Svg>
                    Home-Ekrandan Ayrıl
                  </button>
                </div>
                <div className="flex flex-1 gap-[5px] px-[14px] pb-4 pt-[14px]">
                  <DateNavigator />
                  <Scheduler />
                </div>
              </div>
              <div className="h-1 bg-[#fee6a2]" />
            </div>
          </main>
          <StatusBar />
        </div>
      </div>
    </div>
  );
}
